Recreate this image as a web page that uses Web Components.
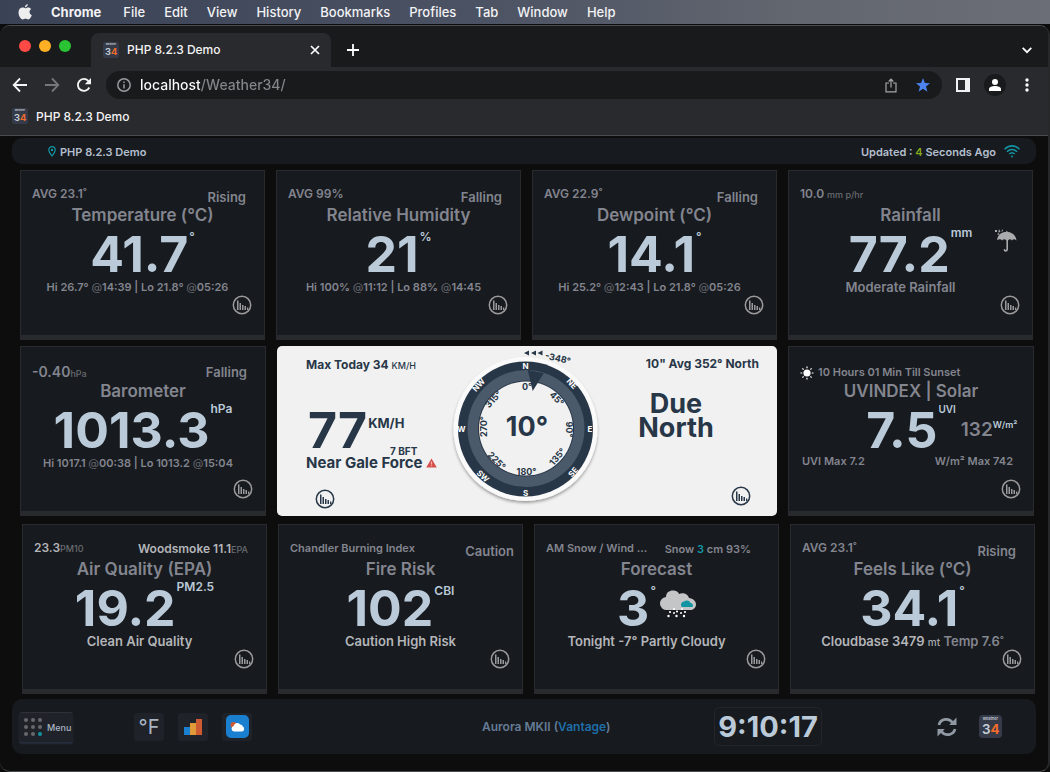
<!DOCTYPE html>
<html lang="en">
<head>
<meta charset="utf-8">
<title>PHP 8.2.3 Demo</title>
<style>
  body { margin: 0; min-height: 100vh; display: flex; flex-direction: column; background: #0c0c0c; font-family: Inter, "Liberation Sans", sans-serif; color: #83858f; }
  dash-row.first { padding: 6px 15px 0 20px; }
  dash-row.second { padding: 6px 14px 0 20px; }
  dash-row.third { padding: 8px 13px 0 22px; }
  dash-row.second weather-card { flex: 1 1 0; }
  dash-row.second wind-card { flex: 2 1 12px; }
  small { font-size: 9px; font-weight: 500; color: #696b72; }
  small.lit { color: #a9abaf; font-size: 10px; }
  .lit { color: #b4b5b9; }
  .at { color: #66686f; font-weight: 400; }
  .cyan { color: #1295a3; }
  .deg { position: relative; top: -3px; font-size: 9px; }
  .s10 { font-size: 10px; }
  .s11 { font-size: 11px; }
  .s14 { font-size: 14px; }
  svg { display: block; }
</style>
</head>
<body>
<mac-menubar></mac-menubar>
<browser-window>
  <status-bar place="PHP 8.2.3 Demo" seconds="4"></status-bar>
  <dash-row class="first">
    <weather-card heading="Temperature (°C)">
      <span slot="lead">AVG 23.1<span class="deg">°</span></span><span slot="trend">Rising</span>
      <span slot="value">41.7</span><span slot="unit">°</span>
      <span slot="note">Hi 26.7° <span class="at">@</span>14:39 | Lo 21.8° <span class="at">@</span>05:26</span>
    </weather-card>
    <weather-card heading="Relative Humidity">
      <span slot="lead">AVG 99%</span><span slot="trend">Falling</span>
      <span slot="value">21</span><span slot="unit">%</span>
      <span slot="note">Hi 100% <span class="at">@</span>11:12 | Lo 88% <span class="at">@</span>14:45</span>
    </weather-card>
    <weather-card heading="Dewpoint (°C)">
      <span slot="lead">AVG 22.9<span class="deg">°</span></span><span slot="trend">Falling</span>
      <span slot="value">14.1</span><span slot="unit">°</span>
      <span slot="note">Hi 25.2° <span class="at">@</span>12:43 | Lo 21.8° <span class="at">@</span>05:26</span>
    </weather-card>
    <weather-card heading="Rainfall" raised spaced>
      <span slot="lead">10.0 <small>mm p/hr</small></span>
      <span slot="value">77.2</span><span slot="unit">mm</span>
      <svg slot="aside" width="24" height="24" viewBox="0 0 24 24" style="margin:-28px 0 0 22px" fill="#a9abad" aria-hidden="true"><path d="M3 12C4 6 8 4 12 4l.6-1.2L14 4c5 .5 8 4 8.500 8.500-2-1.800-3.500-1.500-4.500 0-1.300-1.600-2.700-1.600-4 0V21c0 3.500-4 3.500-4.500.5l1.400-.4c.2 1.300 1.500 1.200 1.500-.2v-8.400c-1.600-1.600-3-1.600-4.200 0-1.400-1.700-3-1.700-5.200-.5zM1 2h2v2H1zM5 1l1.500 3-2.200.6zM3 6l2-1 .2 2zM8 1l1 2-1.500.8z"/></svg>
      <span slot="note" class="lg">Moderate Rainfall</span>
    </weather-card>
  </dash-row>
  <dash-row class="second">
    <weather-card heading="Barometer" low raised>
      <span slot="lead"><span class="s14">-0.40</span><small>hPa</small></span><span slot="trend">Falling</span>
      <span slot="value">1013.3</span><span slot="unit">hPa</span>
      <span slot="note">Hi 1017.1 <span class="at">@</span>00:38 | Lo 1013.2 <span class="at">@</span>15:04</span>
    </weather-card>
    <wind-card></wind-card>
    <weather-card heading="UVINDEX | Solar" low split raised>
      <span slot="lead" class="sun"><svg width="14" height="14" viewBox="0 0 14 14" style="display:inline-block;vertical-align:-4px;margin-right:4px" aria-hidden="true"><circle cx="7" cy="7" r="3.600" fill="#fff"/><path d="M7 .5v1.800M7 11.700v1.800M.5 7h1.800M11.700 7h1.800M2.400 2.400l1.200 1.200M10.400 10.400l1.200 1.200M2.400 11.600l1.200-1.200M10.400 3.600l1.200-1.200" stroke="#fff" stroke-width="1.200"/></svg><span class="s11">10 Hours 01 Min Till Sunset</span></span>
      <span slot="value">7.5</span><span slot="unit" class="s10">UVI</span>
      <solar-reading slot="aside">132</solar-reading>
      <span slot="note">UVI Max 7.2</span><span slot="note">W/m² Max 742</span>
    </weather-card>
  </dash-row>
  <dash-row class="third">
    <weather-card heading="Air Quality (EPA)" even raised>
      <span slot="lead" class="lit">23.3<small>PM10</small></span><span slot="trend" class="lit s12">Woodsmoke 11.1<small>EPA</small></span>
      <span slot="value">19.2</span><span slot="unit">PM2.5</span>
      <span slot="note" class="lg lit">Clean Air Quality</span>
    </weather-card>
    <weather-card heading="Fire Risk" far centred>
      <span slot="lead" class="s11">Chandler Burning Index</span><span slot="trend">Caution</span>
      <span slot="value">102</span><span slot="unit">CBI</span>
      <span slot="note" class="lg lit">Caution High Risk</span>
    </weather-card>
    <weather-card heading="Forecast" even spaced>
      <span slot="lead" class="s11">AM Snow / Wind ...</span><span slot="trend" class="s11">Snow <span class="cyan">3</span> cm 93%</span>
      <span slot="value">3</span><span slot="unit">°</span>
      <svg slot="pic" width="36" height="28" viewBox="0 0 36 28" style="margin:-8px 0 0 4px" aria-hidden="true"><path d="M7 20a6.500 6.500 0 0 1-1-13C6 2 10 0 14 .5c3 .3 4.500 2 5 3.500 4-2 9 0 10 4 4 .5 7 3 7 6.500 0 3.500-3 5.500-6 5.500z" fill="#c4c5c6"/><path d="M22 17c-2-1.500-1-5 2-5.500 2.500-2 6-1 6.500 1.500 2.500.2 3 2.500 2 4z" fill="#1295a3"/><g fill="#fff"><circle cx="14" cy="19" r="1"/><circle cx="22" cy="19" r="1"/><circle cx="10" cy="22" r="1.100"/><circle cx="14" cy="23" r="1"/><circle cx="17" cy="21.500" r="1.100"/><circle cx="21" cy="23" r="1"/><circle cx="25" cy="22" r="1.100"/><circle cx="8.500" cy="26" r="1.200"/><circle cx="16.500" cy="26" r="1.200"/><circle cx="24" cy="26" r="1.200"/></g></svg>
      <span slot="note" class="lg lit">Tonight -7° Partly Cloudy</span>
    </weather-card>
    <weather-card heading="Feels Like (°C)" centred>
      <span slot="lead">AVG 23.1<span class="deg">°</span></span><span slot="trend">Rising</span>
      <span slot="value">34.1</span><span slot="unit">°</span>
      <span slot="note" class="lg"><span class="lit">Cloudbase 3479 </span><small class="lit">mt</small> Temp 7.6<span class="deg">°</span></span>
    </weather-card>
  </dash-row>
  <dash-footer></dash-footer>
</browser-window>

<script>
const make = (name, html, setup) => customElements.define(name, class extends HTMLElement {
  connectedCallback() {
    if (this.shadowRoot) return;
    const root = this.attachShadow({ mode: 'open' });
    const t = document.createElement('template');
    t.innerHTML = html;
    root.append(t.content.cloneNode(true));
    if (setup) setup(this, root);
  }
});
const reset = `*{box-sizing:border-box} button{font:inherit;color:inherit;background:none;border:0;padding:0;margin:0;display:block} a{color:inherit;text-decoration:none} svg{display:block}`;

make('chart-link', `<style>${reset}:host{display:block;width:20px;height:20px;color:#9a9a9c}</style>
<a href="#chart" aria-label="Open chart"><svg width="20" height="20" viewBox="0 0 20 20"><circle cx="10" cy="10" r="8.700" fill="none" stroke="currentColor" stroke-width="1.500"/><path d="M5 5.500h1.500V15H5zM7.500 8H9v7H7.500zM10 10h1.500v5H10zM12.500 11H14v4h-1.500zM15 12.500h1.300V15H15z" fill="currentColor"/></svg></a>`);

make('station-logo', `<style>:host{display:block;flex:none;width:var(--s,16px);height:var(--s,16px)} svg{display:block;width:100%;height:100%}</style>
<svg viewBox="0 0 24 24" font-family="Inter, sans-serif"><rect width="24" height="24" rx="4" fill="#363b4a"/><text x="4" y="5" font-size="4" font-weight="600" fill="#c8cdd6">weather</text><text x="3" y="20" font-size="14" font-weight="600" fill="#c8d0dc">3</text><text x="12" y="20" font-size="14" font-weight="700" fill="#f36c2c">4</text></svg>`);

make('mac-menubar', `<style>${reset}
:host{display:block;background:linear-gradient(90deg,#3a4256,#4b5263 45%,#62666f 75%,#6b6e76)}
nav{display:flex;align-items:center;gap:19px;height:24px;padding-left:18px;color:#f2f2f4;font-size:13px;font-weight:500;line-height:16px}
b{font-weight:700;padding-right:3px}</style>
<nav aria-label="Application menu">
<button aria-label="Apple"><svg width="14" height="16" viewBox="0 0 14 16" fill="#eee"><path d="M9.800 0c.1 1.800-1.300 3.400-2.900 3.400C6.700 1.800 8.200.2 9.800 0zM7.200 4.300c.8 0 1.700-.8 3.100-.8 1.100 0 2.200.6 2.900 1.600-2.500 1.500-2.100 5 .6 6.100-.6 1.600-2 4.300-3.500 4.300-1.100 0-1.500-.7-2.800-.7s-1.700.7-2.800.7C2.700 15.500.5 11.800.5 8.600c0-3.200 2-5 4-5 1.200 0 2 .7 2.700.7z"/></svg></button>
<button><b>Chrome</b></button><button>File</button><button>Edit</button><button>View</button><button>History</button><button>Bookmarks</button><button>Profiles</button><button>Tab</button><button>Window</button><button>Help</button></nav>`);

make('browser-window', `<style>${reset}
:host{flex:1;display:flex;flex-direction:column;background:#0d0d0d;border:solid #4a4b4e;border-width:1px 2px 1px 0;border-right-color:#27282a;border-radius:10px;margin-top:1px;overflow:hidden;color:#83858f}
.tabs{display:flex;align-items:flex-end;height:41px;background:#191a1b;padding:0 16px 0 19px}
.lights{display:flex;gap:8px;align-self:center;padding-bottom:2px}
.lights button{width:12px;height:12px;border-radius:50%}
.tab{display:flex;align-items:center;width:240px;height:34px;margin-left:20px;padding:0 11px 1px 12px;border-radius:8px 8px 0 0;background:#292a2d;color:#f4f4f5;font-size:12px;font-weight:500}
.tab span{flex:1;padding-left:8px}
.plus{margin:0 auto 11px 16px}
.down{margin-bottom:13px}
.tools{display:flex;align-items:center;height:36px;background:#292a2d;padding:0 19px 0 12px}
.tools>button{flex:none}
.omni{flex:1;display:flex;align-items:center;height:28px;border-radius:14px;background:#191a1b;margin:0 14px 0 14px;padding:0 12px 0 11px}
.omni input{flex:1;min-width:0;margin-left:9px;padding:0;border:0;outline:0;font:500 14px/20px Inter,sans-serif;color:#8f9094;-webkit-text-fill-color:transparent;background:linear-gradient(90deg,#fff 60px,#85868a 60px);-webkit-background-clip:text;background-clip:text}
.marks{display:flex;align-items:center;height:33px;background:#292a2d;border-bottom:1px solid #4a4b4e;padding:0 12px 6px;color:#f4f4f5;font-size:12px;font-weight:500}
.marks a{display:flex;align-items:center;gap:8px}
.person{width:22px;height:22px;border-radius:50%;background:#191a1b;display:grid;place-items:center;margin:0 19px 0 14px}
main{flex:1;padding:2px 0 0}</style>
<div class="tabs"><div class="lights"><button aria-label="Close" style="background:#ff4945"></button><button aria-label="Minimise" style="background:#ffb024"></button><button aria-label="Zoom" style="background:#2ac333"></button></div>
<div class="tab"><station-logo></station-logo><span>PHP 8.2.3 Demo</span><button aria-label="Close tab"><svg width="10" height="10" viewBox="0 0 10 10"><path d="M1 1l8 8M9 1l-8 8" stroke="#fff" stroke-width="1.700"/></svg></button></div>
<button class="plus" aria-label="New tab"><svg width="12" height="12" viewBox="0 0 12 12"><path d="M6 0v12M0 6h12" stroke="#fff" stroke-width="1.800"/></svg></button>
<button class="down" aria-label="Search tabs"><svg width="10" height="7" viewBox="0 0 10 7"><path d="M.7.8 5 5.200 9.300.8" fill="none" stroke="#fff" stroke-width="1.700"/></svg></button></div>
<div class="tools"><button aria-label="Back"><svg width="16" height="16" viewBox="0 0 16 16"><path d="M15 8H2M8 1.500 1.700 8 8 14.500" fill="none" stroke="#f4f4f5" stroke-width="1.800"/></svg></button>
<button aria-label="Forward" style="margin-left:16px"><svg width="16" height="16" viewBox="0 0 16 16"><path d="M1 8h13M8 1.500 14.300 8 8 14.500" fill="none" stroke="#76777a" stroke-width="1.800"/></svg></button>
<button aria-label="Reload" style="margin-left:16px"><svg width="16" height="16" viewBox="0 0 16 16"><path d="M13.300 10.500A6 6 0 1 1 12.300 3.800L14 5.500" fill="none" stroke="#f4f4f5" stroke-width="1.900"/><path d="M15 1v6.200H8.800z" fill="#f4f4f5"/></svg></button>
<div class="omni"><button aria-label="Site information"><svg width="14" height="14" viewBox="0 0 14 14" fill="none" stroke="#9a9b9f" stroke-width="1.500"><circle cx="7" cy="7" r="6.200"/><path d="M7 6.200v4.300M7 3.400V5"/></svg></button><input aria-label="Address" value="localhost/Weather34/">
<button aria-label="Share"><svg width="12" height="15" viewBox="0 0 12 15" fill="none" stroke="#a5a6a9" stroke-width="1.200"><path d="M4 5H1v8.800h10V5H8M6 9.500V1.200M3.700 3.500 6 1.200l2.300 2.300"/></svg></button>
<button aria-label="Bookmark" style="margin-left:19px"><svg width="14" height="14" viewBox="0 0 14 14"><path d="M7 0l1.900 4.900 5.100.3-4 3.300 1.400 5.200L7 10.800l-4.400 2.900L4 8.500 0 5.200l5.100-.3z" fill="#4c83f0"/></svg></button></div>
<button aria-label="Side panel"><svg width="14" height="14" viewBox="0 0 14 14"><path d="M0 0h14v14H0zM2 2v10h7V2z" fill-rule="evenodd" fill="#f1f2f4"/></svg></button>
<button class="person" aria-label="Profile"><svg width="12" height="12" viewBox="0 0 12 12" fill="#fff"><circle cx="6" cy="3" r="3"/><path d="M0 12v-2c0-4 12-4 12 0v2z"/></svg></button>
<button aria-label="More"><svg width="4" height="14" viewBox="0 0 4 14" fill="#fff"><circle cx="2" cy="2" r="1.700"/><circle cx="2" cy="7" r="1.700"/><circle cx="2" cy="12" r="1.700"/></svg></button></div>
<div class="marks"><a href="#home"><station-logo></station-logo>PHP 8.2.3 Demo</a></div>
<main><slot></slot></main>`);

make('status-bar', `<style>${reset}
:host{display:flex;align-items:center;box-sizing:border-box;height:26px;margin:0 12px;margin-right:12px;padding:1px 16px 0 36px;border-radius:10px;background:#171a1e;color:#b3bfcd;font-size:11px;font-weight:600;line-height:16px}
.place{padding-left:4px;flex:1}
em{font-style:normal;color:#84a71d}
.wifi{margin-left:8px}</style>
<svg width="8" height="11" viewBox="0 0 8 11"><path d="M4 .6C2 .6.800 2 .800 4c0 2 3.200 6 3.200 6S7.200 6 7.200 4C7.200 2 6 .6 4 .6z" fill="none" stroke="#1295a3" stroke-width="1.200"/><circle cx="4" cy="4" r="1.200" fill="#1295a3"/></svg>
<span class="place"></span><span>Updated : <em></em> Seconds Ago</span>
<svg class="wifi" width="16" height="13" viewBox="0 0 16 13" fill="none" stroke="#1295a3" stroke-width="1.600"><path d="M.6 4.200C5-.3 11-.3 15.400 4.200M3 6.700c3-3 7-3 10 0M5.300 9c1.700-1.600 3.700-1.600 5.400 0"/><circle cx="8" cy="11.500" r="1" fill="#1295a3" stroke="none"/></svg>`, (el, r) => {
  r.querySelector('.place').textContent = el.getAttribute('place');
  r.querySelector('em').textContent = el.getAttribute('seconds');
});

make('dash-row', `<style>:host{display:flex;gap:11px} ::slotted(weather-card){flex:1 1 0;min-width:0}</style><slot></slot>`);

make('weather-card', `<style>${reset}
:host{display:flex;flex-direction:column;box-sizing:border-box;height:170px;border:1px solid #292a2e;border-bottom-width:5px;background:#171a1e;color:#83858f}
header{display:flex;justify-content:space-between;height:34px;padding:13px 18px 0 11px;line-height:20px;font-size:12px;font-weight:600;white-space:nowrap}
.trend{font-size:13px;padding-top:3px}
:host([even]) .trend{padding-top:0}
:host([low]) header{padding-top:15px}
:host([low]) .trend{padding-top:0}
:host([far]) header{padding-right:8px}
:host([spaced]) header{padding-right:27px}
h2{margin:0;font-size:17px;font-weight:600;line-height:20px;text-align:center}
.reading{display:grid;grid-template-columns:1fr auto 1fr;align-items:center;height:54px;padding-top:4px}
.value{grid-column:2;display:flex;align-items:center;color:#bbcad9;font-size:50px;font-weight:700;line-height:48px}
.unit{align-self:flex-start;margin:-1px 0 0 1px;font-size:12px;font-weight:600;line-height:16px}
:host([raised]) .unit{margin-top:-5px}
.note{display:flex;justify-content:center;height:16px;padding-right:10px;font-size:11px;font-weight:600;line-height:16px;white-space:nowrap}
:host([centred]) .note{padding-right:0}
:host([spaced]) .note{padding-right:20px}
:host([split]) .note{justify-content:space-between;align-items:flex-start;line-height:12px;padding:0 20px 0 13px}
::slotted(.lg){font-size:13px}
::slotted(.s11){font-size:11px}
::slotted(.s12){font-size:12px}
chart-link{align-self:flex-end;margin-right:12px}
:host([low]) chart-link{margin-top:8px}</style>
<header><div><slot name="lead"></slot></div><div class="trend"><slot name="trend"></slot></div></header>
<h2></h2>
<div class="reading"><div class="value"><slot name="value"></slot><span class="unit"><slot name="unit"></slot></span><slot name="pic"></slot></div><slot name="aside"></slot></div>
<div class="note"><slot name="note"></slot></div>
<chart-link></chart-link>`, (el, r) => { r.querySelector('h2').textContent = el.getAttribute('heading'); });

make('solar-reading', `<style>:host{display:flex;margin-left:5px;font-size:19px;font-weight:600;line-height:20px;color:#83858f} sup{font-size:9px;line-height:10px;color:#bbcad9}</style><slot></slot><sup>W/m²</sup>`);

const polar = (items) => items.map(([s, x, y, a]) => `<text x="${x}" y="${y}" transform="rotate(${a} ${x} ${y})">${s}</text>`).join('');
make('wind-compass', `<style>:host{display:block} svg{display:block} text{font-family:Inter,sans-serif;font-weight:700;text-anchor:middle;dominant-baseline:central}</style>
<svg width="160" height="166" viewBox="445 348 160 166" role="img" aria-label="Wind direction 10 degrees">
<defs><filter id="s" x="-20%" y="-20%" width="140%" height="140%"><feDropShadow dx="0" dy="2" stdDeviation="1.500" flood-opacity=".35"/></filter></defs>
<circle cx="524.500" cy="429" r="72" fill="#fafafa" filter="url(#s)"/><circle cx="524.500" cy="429" r="67.500" fill="#283748"/><circle cx="525" cy="428.500" r="58.500" fill="#4b5a6a"/><circle cx="525" cy="428.500" r="48" fill="#283748"/><circle cx="525" cy="428.500" r="47" fill="#f1f1f1"/>
<path d="M526.700 370l16 3.300-11 17.700z" fill="#283748"/>
<g fill="#fff" font-size="8">${polar([['N',524.5,365.5,0],['NE',571,383.5,48],['E',589,429,0],['SE',572,472,-50],['S',524.5,493,0],['SW',482,476,42],['W',460.5,429,0],['NW',477.5,385,-48]])}</g>
<g fill="#283748" font-size="9">${polar([['0°',526,386,0],['45°',556,398.5,45],['90°',568,429.5,90],['135°',556,456.5,-50],['180°',525.5,471,0],['225°',496,460.5,45],['270°',482,426.5,-90],['315°',492,399,-48],['-348°',557,358,13]])}</g>
<text x="526" y="426" font-size="27" fill="#283748">10°</text>
<path d="M523 353l5-2.500v5zM530 353l5-2.500v5zM536.500 353l5-2.500v5z" fill="#283748"/></svg>`);

make('wind-card', `<style>${reset}
:host{display:grid;grid-template-columns:1fr 160px 1fr;box-sizing:border-box;height:170px;border-radius:5px;background:#f1f1f1;color:#283748;font-weight:700;white-space:nowrap}
.left{padding:11px 0 0 29px}
.right{display:flex;flex-direction:column;padding:10px 18px 0 0}
p{margin:0;font-size:12px;line-height:16px}
.right p{align-self:flex-end}
small{font-size:9px;font-weight:500}
.speed{display:flex;font-size:50px;line-height:34px;margin:39px 0 0 2px}
.speed span{font-size:13px;line-height:20px;padding-left:1px}
.bft{font-size:10px;line-height:8px;padding-left:84px}
.force{display:flex;align-items:center;gap:4px;font-size:15px;line-height:16px}
chart-link{color:#283748}
.left chart-link{margin:18px 0 0 9px}
.dir{width:100px;margin:20px 0 0 19px;font-size:27px;line-height:24px;text-align:center}
.right chart-link{align-self:flex-end;margin:46px 8px 0 0}
.mid{padding:2px 0 0}
wind-compass{margin-left:-1px}</style>
<div class="left"><p>Max Today 34 <small>KM/H</small></p><div class="speed">77<span>KM/H</span></div><div class="bft">7 BFT</div><div class="force">Near Gale Force<svg width="11" height="10" viewBox="0 0 11 10"><path d="M5.500.500 10.800 9.500H.2z" fill="#d5504a"/><path d="M5.500 3.500v3M5.500 7.300v1" stroke="#f1b0aa" stroke-width="1.200"/></svg></div><chart-link></chart-link></div>
<div class="mid"><wind-compass></wind-compass></div>
<div class="right"><p>10" Avg 352° North</p><div class="dir">Due<br>North</div><chart-link></chart-link></div>`);

make('dash-footer', `<style>${reset}
:host{display:grid;grid-template-columns:470fr 232fr 322fr;align-items:center;height:55px;margin:5px 12px 0;border-radius:10px;background:#171a1e}
.left{display:flex;align-items:center;gap:14px;padding-left:7px}
.left button{display:grid;place-items:center;width:30px;height:28px;border-radius:3px;background:#1f2229}
.left button.menu{display:flex;gap:5px;width:54px;height:30px;margin-right:47px;padding-left:5px;border-top:1px solid #303136;box-shadow:0 2px 2px #27303f;color:#aab5c4;font-size:9px;font-weight:500}
.left button.f{font-size:20px;color:#aab5c4;font-weight:400}
.model{font-size:12px;font-weight:600;color:#667c96;white-space:nowrap}
.model a{color:#1f6ea8}
.right{display:flex;align-items:center;padding-right:34px}
time{display:grid;place-items:center;width:108px;height:39px;border:1px solid #23252a;border-radius:5px;color:#bbcad9;font-size:29px;font-weight:700;margin-right:auto}
.right button{margin-right:22px}
station-logo{--s:23px}</style>
<div class="left"><button class="menu"><svg width="18" height="18" viewBox="0 0 18 18" fill="#67686b"><circle cx="2" cy="2" r="2"/><circle cx="9" cy="2" r="2"/><circle cx="16" cy="2" r="2"/><circle cx="2" cy="9" r="2"/><circle cx="9" cy="9" r="2"/><circle cx="16" cy="9" r="2"/><circle cx="2" cy="16" r="2"/><circle cx="9" cy="16" r="2"/><circle cx="16" cy="16" r="2" fill="#1295a3"/></svg>Menu</button>
<button class="f">°F</button>
<button aria-label="Charts"><svg width="18" height="16" viewBox="0 0 18 16"><path d="M0 8h6v8H0z" fill="#1b7fd0"/><path d="M6 4h6v12H6z" fill="#e09a3a"/><path d="M12 0h6v16h-6z" fill="#cd5a30"/></svg></button>
<button aria-label="Forecast"><svg width="23" height="23" viewBox="0 0 23 23"><rect width="23" height="23" rx="5" fill="#1b7fd0"/><circle cx="7.500" cy="10" r="3" fill="#cd5a30"/><path d="M8 16.500a2.800 2.800 0 0 1-.3-5.500c.8-3.500 5-3.800 6.300-1.500 2 0 2.500 1 2.700 2 2 .3 2 5-.7 5z" fill="#fff"/></svg></button></div>
<div class="model">Aurora MKII (<a href="#vantage">Vantage</a>)</div>
<div class="right"><time>9:10:17</time><button aria-label="Refresh"><svg width="20" height="20" viewBox="0 0 20 20"><g fill="none" stroke="#8f98a3" stroke-width="2.800"><path d="M2 8C3.500 1.500 12 .500 15.500 5.500M18 12C16.500 18.500 8 19.500 4.500 14.500"/></g><path d="M19.500.5V8h-7.300zM.5 19.500V12h7.300z" fill="#8f98a3"/></svg></button><a href="#about" aria-label="Weather34"><station-logo></station-logo></a></div>`);
</script>
</body>
</html>
